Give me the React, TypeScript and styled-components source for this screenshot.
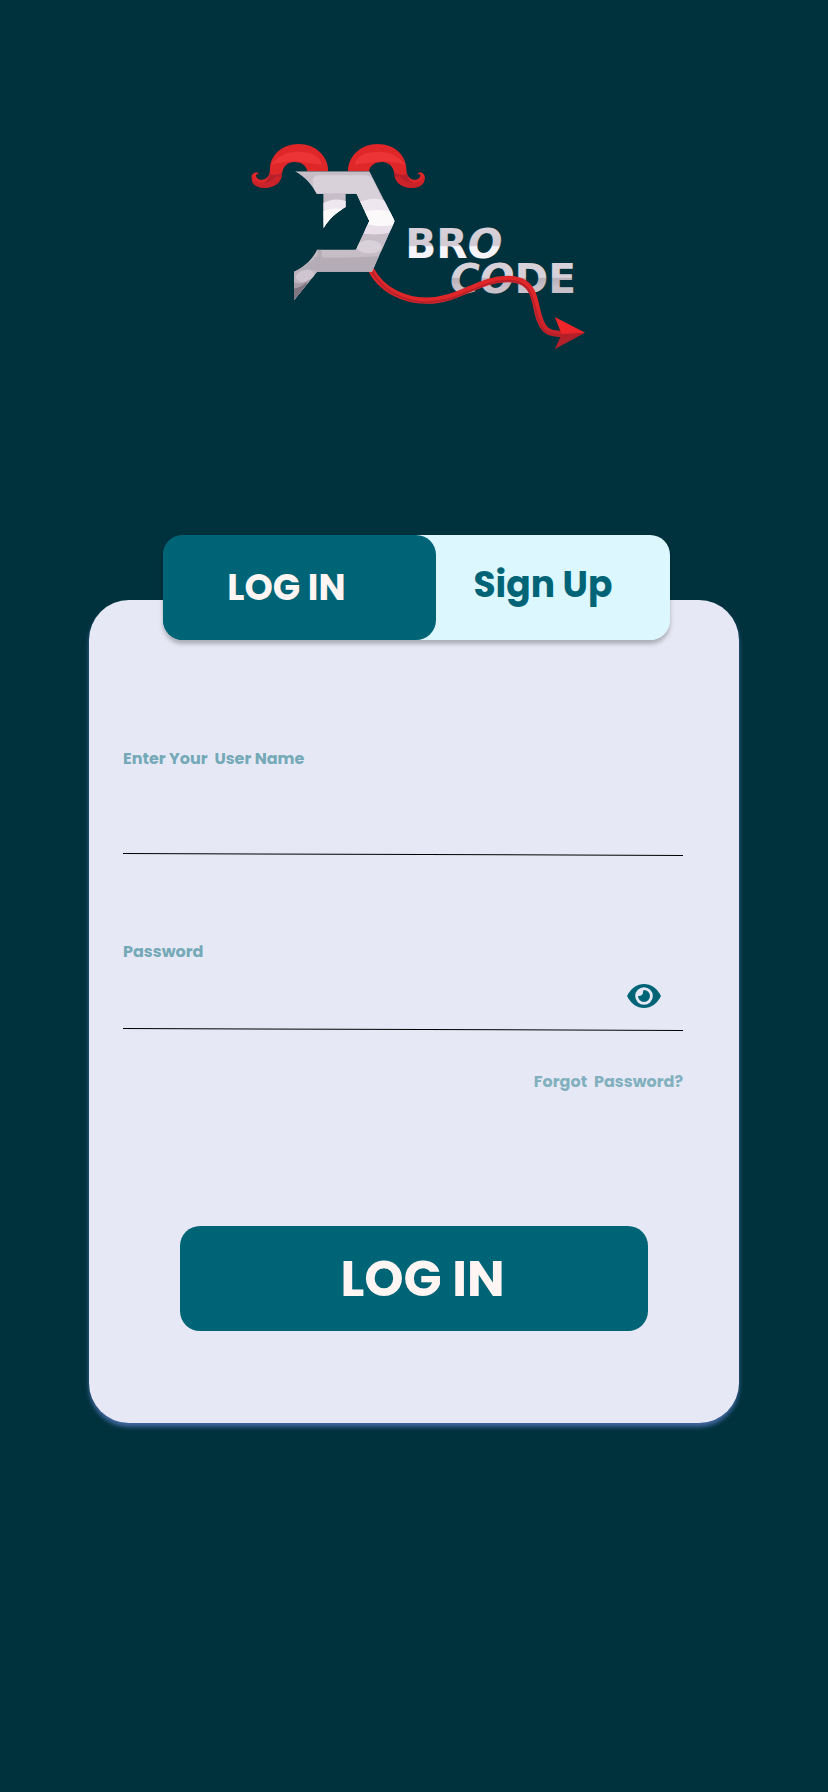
import React, { useState } from "react";
import styled, { createGlobalStyle } from "styled-components";

const GlobalStyle = createGlobalStyle`
  *, *::before, *::after { box-sizing: border-box; }
  body {
    margin: 0;
    background: #00323d;
    font-family: Poppins, Inter, "Open Sans", sans-serif;
  }
  button, input { font: inherit; }
`;

const Page = styled.main`
  display: flex;
  flex-direction: column;
  align-items: center;
  min-height: 100vh;
  padding: 142px 89px 120px;
  background: #00323d;
`;

const Brand = styled.svg`
  display: block;
  width: 338px;
  max-width: 100%;
  margin-left: 10px;
`;

const Card = styled.section`
  display: flex;
  flex-direction: column;
  align-items: center;
  width: 100%;
  margin-top: 248px;
  padding-bottom: 92px;
  border-radius: 40px;
  background: #e6e9f5;
  box-shadow: 0 4px 4px #40669e;
`;

const Tabs = styled.div`
  display: flex;
  width: 78%;
  height: 105px;
  margin: -65px 0 0 4px;
  border-radius: 20px;
  background: linear-gradient(90deg, #006477 40%, #ddf7ff 40%);
  box-shadow: 0 4px 4px rgba(0, 0, 0, 0.25);
`;

const Tab = styled.button<{ $active?: boolean }>`
  flex: ${(p) => (p.$active ? 272 : 234)} 1 0;
  min-width: 0;
  padding: ${(p) => (p.$active ? "0 26px 0 0" : "0 20px 6px 0")};
  border: 0;
  border-radius: 20px;
  background: ${(p) => (p.$active ? "#006477" : "transparent")};
  color: ${(p) => (p.$active ? "#fff5f3" : "#006477")};
  font-size: 36px;
  font-weight: 700;
  white-space: nowrap;
  cursor: pointer;
`;

const Form = styled.form`
  display: flex;
  flex-direction: column;
  align-items: center;
  width: 100%;
  padding-top: 107px;
`;

const Fields = styled.div`
  display: flex;
  flex-direction: column;
  width: 100%;
  padding: 0 56px 0 34px;
`;

const Field = styled.div`
  display: flex;
  flex-direction: column;
  & + & { margin-top: 85px; }
`;

const Label = styled.label`
  color: #75a9b8;
  font-size: 16px;
  font-weight: 700;
  line-height: 24px;
  white-space: pre;
`;

const InputRow = styled.div<{ $height: number }>`
  display: flex;
  align-items: center;
  height: ${(p) => p.$height}px;
  padding: 0 22px 2px 0;
`;

const TextInput = styled.input`
  flex: 1;
  min-width: 0;
  height: 100%;
  padding: 0;
  border: 0;
  outline: 0;
  background: transparent;
  color: #006477;
  font-size: 20px;
`;

const Rule = styled.div`
  height: 1px;
  background: #000;
  transform: rotate(0.2deg);
`;

const EyeButton = styled.button`
  display: flex;
  padding: 0;
  border: 0;
  background: transparent;
  color: #006477;
  cursor: pointer;
`;

const ForgotLink = styled.a`
  align-self: flex-end;
  margin-top: 40px;
  color: #82b0be;
  font-size: 16px;
  font-weight: 700;
  line-height: 24px;
  white-space: pre;
  text-decoration: none;
`;

const Submit = styled.button`
  width: 72%;
  height: 105px;
  margin-top: 132px;
  padding: 0 0 0 17px;
  border: 0;
  border-radius: 20px;
  background: #006477;
  color: #fff5f3;
  font-size: 50px;
  font-weight: 700;
  cursor: pointer;
`;

const Wordmark = styled.text`
  font-family: "DejaVu Sans", sans-serif;
  font-size: 122px;
  font-weight: 700;
`;

const Slanted = styled.tspan`
  font-style: oblique;
`;

function Horn() {
  return (
    <g clipPath="url(#horn)">
      <rect x="30" y="36" width="240" height="142" fill="#df2629" />
      <path d="M92 104Q130 60 182 66Q236 68 246 104Q205 100 165 94Q120 96 92 104Z" fill="#ec3336" />
      <path d="M88 132Q108 140 128 126V180H30V150Q80 176 88 132Z" fill="#b5202b" />
      <path d="M36 142Q48 162 78 158Q102 152 110 138L128 142Q110 176 70 174Q34 166 36 142Z" fill="#cc2229" />
    </g>
  );
}

function Logo() {
  return (
    <Brand viewBox="30 36 1014 630" role="img" aria-label="D Bro Code">
      <defs>
        <clipPath id="horn">
          <path d="M265 124C265 78 226 42 176 42C126 42 91 76 90 116C90 136 80 149 65 149C53 149 46 140 49 134C51 130 54 133 56 135C57 128 48 124 41 130C34 134 33 144 36 153C41 167 54 173 70 173C102 175 124 158 126 132C128 108 145 96 162 96C184 96 199 106 202 124Z" />
        </clipPath>
        <clipPath id="emblem">
          <path d="M165 124H388L464 273L396 425H231L162 511V425C192 412 218 388 231 359H348L388 273L350 192H317V231C291 247 266 267 251 294L250 192H230C216 164 196 142 165 124Z" />
        </clipPath>
        <linearGradient id="bro" x1="0" y1="300" x2="0" y2="384" gradientUnits="userSpaceOnUse">
          <stop offset="0" stopColor="#d8d1d9" />
          <stop offset="0.55" stopColor="#d2cad3" />
          <stop offset="0.6" stopColor="#f6f4f8" />
          <stop offset="1" stopColor="#f6f4f8" />
        </linearGradient>
        <linearGradient id="code" x1="0" y1="404" x2="0" y2="488" gradientUnits="userSpaceOnUse">
          <stop offset="0" stopColor="#d8d1d9" />
          <stop offset="0.45" stopColor="#d8d1d9" />
          <stop offset="0.5" stopColor="#b8b0b8" />
          <stop offset="0.8" stopColor="#c9c1ca" />
          <stop offset="1" stopColor="#c9c1ca" />
        </linearGradient>
        <linearGradient id="tail" x1="0" y1="420" x2="0" y2="630" gradientUnits="userSpaceOnUse">
          <stop offset="0" stopColor="#df2629" />
          <stop offset="0.5" stopColor="#df2629" />
          <stop offset="1" stopColor="#bd2229" />
        </linearGradient>
      </defs>

      <Wordmark x="496" y="384" fill="url(#bro)">BR<Slanted>O</Slanted></Wordmark>
      <Wordmark x="630" y="489" fill="url(#code)"><Slanted>CO</Slanted>DE</Wordmark>

      <path d="M393 419C425 478 488 512 560 512C660 512 713 446 805 447C850 447 870 468 880 496C893 533 893 575 916 598C928 610 944 613 972 611" fill="none" stroke="url(#tail)" strokeWidth="19" />
      <path d="M395 424C428 482 490 517 560 517C664 516 716 452 805 452C846 452 866 472 876 500C889 536 890 578 913 602C926 614 944 617 968 616" fill="none" stroke="#b5202b" strokeWidth="5" />
      <path d="M945 562L1035 608L945 657L965 612Z" fill="#b32029" />
      <path d="M945 562L1035 608L965 612Z" fill="#ee2629" />

      <Horn />
      <g transform="translate(589 0) scale(-1 1)"><Horn /></g>

      <g clipPath="url(#emblem)">
        <rect x="160" y="120" width="310" height="395" fill="#c6bdc7" />
        <path d="M235 136H376Q392 137 400 152L440 236L350 240L346 190H230Q217 174 218 150Q220 138 235 136Z" fill="#d8d1d9" />
        <path d="M248 220Q283 200 320 214V300H248ZM350 220Q400 196 440 214L475 300H350Z" fill="#efe7ef" />
        <path d="M248 244Q280 230 320 240V300H248ZM350 248Q415 232 465 248V288Q410 296 350 272Z" fill="#fcf9fb" />
        <path d="M372 280Q410 294 466 285L450 309Q405 319 360 310Z" fill="#e9dfe9" />
        <path d="M360 310Q405 319 450 309L425 366H340Z" fill="#c6bdc7" />
        <ellipse cx="388" cy="350" rx="37" ry="20" fill="#d8d1d9" />
        <path d="M220 380Q300 386 418 378L398 427H225Z" fill="#b5adb6" />
        <path d="M231 359Q236 378 222 388Q204 401 160 422V440H245V359Z" fill="#b5adb6" />
        <path d="M160 432Q188 410 232 422V515H160Z" fill="#bdb4bf" />
        <ellipse cx="196" cy="438" rx="28" ry="18" transform="rotate(-12 196 438)" fill="#cec5cf" />
        <path d="M160 456Q186 470 222 438V515H160Z" fill="#a59ca6" />
        <path d="M160 476Q182 474 200 456V515H160Z" fill="#7f7580" />
      </g>
    </Brand>
  );
}

function EyeIcon() {
  return (
    <svg width="34" height="24" viewBox="0 0 34 24" aria-hidden="true">
      <path d="M0 12C4 4 10 0 17 0S30 4 34 12C30 20 24 24 17 24S4 20 0 12Z" fill="currentColor" />
      <circle cx="17" cy="12" r="8.8" fill="#e6e9f5" />
      <path d="M17 6A6 6 0 1 1 11 12C13.5 12.5 16 11 16 8.5C16 7.5 16 6.3 17 6Z" fill="currentColor" />
    </svg>
  );
}

export default function App() {
  const [visible, setVisible] = useState(false);
  return (
    <>
      <GlobalStyle />
      <Page>
        <Logo />
        <Card>
          <Tabs>
            <Tab type="button" $active aria-pressed="true">LOG IN</Tab>
            <Tab type="button" aria-pressed="false">Sign Up</Tab>
          </Tabs>
          <Form onSubmit={(e) => e.preventDefault()}>
            <Fields>
              <Field>
                <Label htmlFor="username">{"Enter Your  User Name"}</Label>
                <InputRow $height={83}>
                  <TextInput id="username" type="text" autoComplete="username" />
                </InputRow>
                <Rule />
              </Field>
              <Field>
                <Label htmlFor="password">Password</Label>
                <InputRow $height={65}>
                  <TextInput id="password" type={visible ? "text" : "password"} autoComplete="current-password" />
                  <EyeButton type="button" aria-label="Show password" onClick={() => setVisible(!visible)}>
                    <EyeIcon />
                  </EyeButton>
                </InputRow>
                <Rule />
              </Field>
              <ForgotLink href="#forgot">{"Forgot  Password?"}</ForgotLink>
            </Fields>
            <Submit type="submit">LOG IN</Submit>
          </Form>
        </Card>
      </Page>
    </>
  );
}
